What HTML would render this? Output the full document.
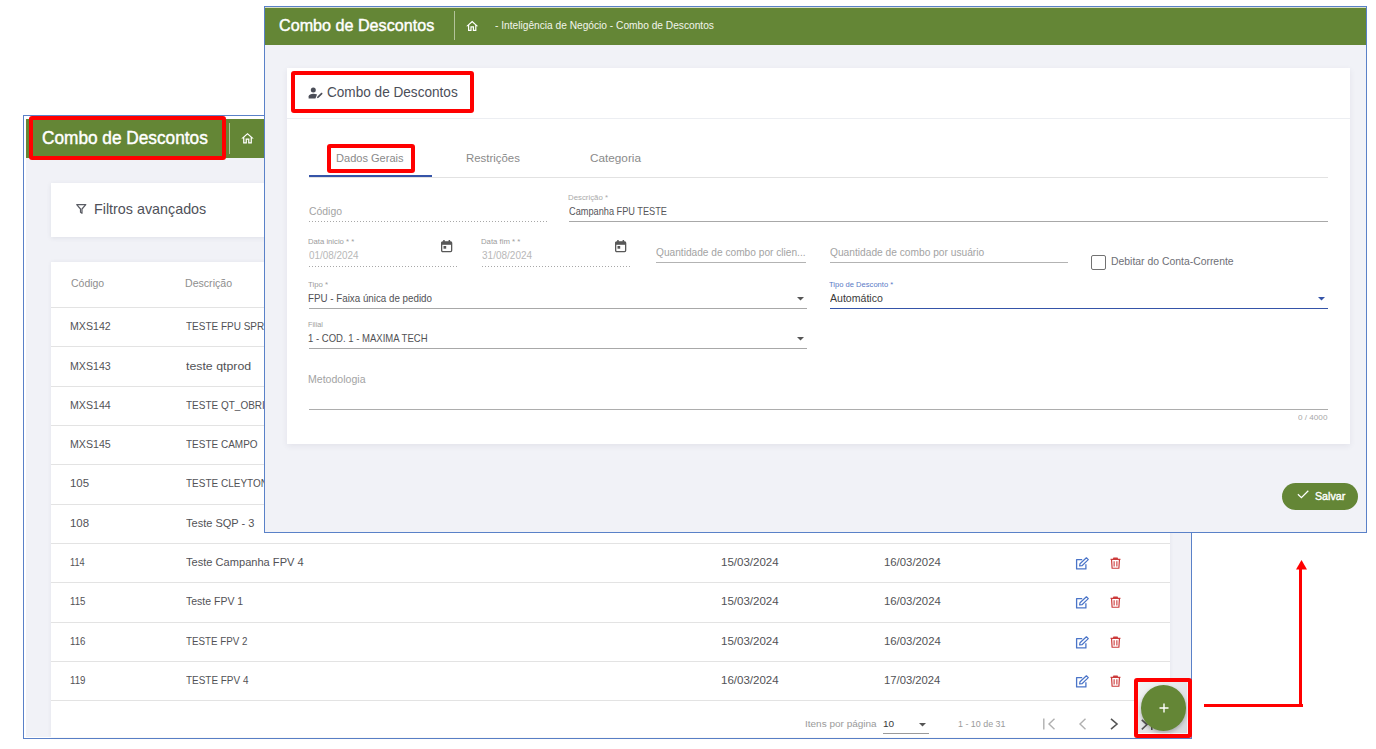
<!DOCTYPE html>
<html><head><meta charset="utf-8">
<style>
*{margin:0;padding:0;box-sizing:border-box}
html,body{width:1376px;height:749px;overflow:hidden;background:#fff;font-family:"Liberation Sans",sans-serif}
.L{position:absolute;left:0;top:0;width:1376px;height:749px}
.b{position:absolute}
.t{position:absolute;white-space:nowrap;line-height:1;transform-origin:0 0}
.r{font-size:11.5px;color:#3d3d3d}
.sep{position:absolute;left:51px;width:1119px;height:1px;background:#e3e3e3}
.red{position:absolute;border:4px solid #ff0000;border-radius:3px}
.ul{position:absolute;height:1px;background:#b3b3b3}
.dot{position:absolute;height:1px;background-image:linear-gradient(to right,#a8a8a8 50%,rgba(255,255,255,0) 50%);background-size:3px 1px}
svg{position:absolute;overflow:visible}
.card{position:absolute;background:#fff;box-shadow:0 1px 5px rgba(40,50,80,.09)}
</style></head><body>

<div class="L" id="backL">
  <div class="b" style="left:23px;top:115px;width:1169px;height:624px;border:1px solid #5a81c8;background:#fff"></div>
  <div class="b" style="left:26px;top:119px;width:1165px;height:618px;background:#f1f2f7;overflow:hidden"></div>
  <div class="b" style="left:26px;top:119px;width:1165px;height:39px;background:#648636"></div>
  <div class="b" style="left:228.5px;top:123px;width:1.5px;height:31px;background:#b3c39a"></div>
  <svg style="left:240.3px;top:130.5px" width="15" height="15" viewBox="0 0 24 24"><path fill="#fff" d="M12 5.69l5 4.5V18h-2v-6H9v6H7v-7.81l5-4.5M12 3L2 12h3v8h6v-6h2v6h6v-8h3L12 3z"/></svg>

  <div class="card" style="left:51px;top:183px;width:1119px;height:54px"></div>
  <svg style="left:76px;top:204px" width="11" height="10" viewBox="0 0 11 10"><path d="M0.7 0.7H9.8L6 5V9.3L4.5 8.3V5Z" fill="none" stroke="#5a5c64" stroke-width="1.2" stroke-linejoin="round"/></svg>

  <div class="card" style="left:51px;top:261.5px;width:1119px;height:475.5px;box-shadow:0 0 4px rgba(40,50,80,.07)"></div>
  <div class="sep" style="top:307.1px"></div>
<div class="sep" style="top:346.4px"></div>
<div class="sep" style="top:385.7px"></div>
<div class="sep" style="top:425.0px"></div>
<div class="sep" style="top:464.3px"></div>
<div class="sep" style="top:503.6px"></div>
<div class="sep" style="top:542.9px"></div>
<div class="sep" style="top:582.2px"></div>
<div class="sep" style="top:621.5px"></div>
<div class="sep" style="top:660.8px"></div>
<div class="sep" style="top:700.1px"></div>
  <svg style="left:1075px;top:557.0px" width="15" height="13" viewBox="0 0 15 13"><path d="M7.2 2.6H1.6V11.9H10.9V7.2" stroke="#4a74c8" stroke-width="1.3" fill="none" stroke-linejoin="round"/><path d="M4.6 9L5 6.8L11.4 0.8L13.3 2.6L7 8.7Z" stroke="#4a74c8" stroke-width="1.2" fill="none" stroke-linejoin="round"/></svg>
<svg style="left:1109.6px;top:557.0px" width="11" height="12.4" viewBox="0 0 12 13"><path d="M0.6 2.4H11.4M4 2.4V0.9H8V2.4M1.7 2.6L2.3 12H9.7L10.3 2.6" stroke="#cc3b3b" stroke-width="1.3" fill="none" stroke-linejoin="round"/><path d="M4.5 4.4V10M7.5 4.4V10" stroke="#cc3b3b" stroke-width="1.2"/></svg>
<svg style="left:1075px;top:596.3px" width="15" height="13" viewBox="0 0 15 13"><path d="M7.2 2.6H1.6V11.9H10.9V7.2" stroke="#4a74c8" stroke-width="1.3" fill="none" stroke-linejoin="round"/><path d="M4.6 9L5 6.8L11.4 0.8L13.3 2.6L7 8.7Z" stroke="#4a74c8" stroke-width="1.2" fill="none" stroke-linejoin="round"/></svg>
<svg style="left:1109.6px;top:596.3px" width="11" height="12.4" viewBox="0 0 12 13"><path d="M0.6 2.4H11.4M4 2.4V0.9H8V2.4M1.7 2.6L2.3 12H9.7L10.3 2.6" stroke="#cc3b3b" stroke-width="1.3" fill="none" stroke-linejoin="round"/><path d="M4.5 4.4V10M7.5 4.4V10" stroke="#cc3b3b" stroke-width="1.2"/></svg>
<svg style="left:1075px;top:635.6px" width="15" height="13" viewBox="0 0 15 13"><path d="M7.2 2.6H1.6V11.9H10.9V7.2" stroke="#4a74c8" stroke-width="1.3" fill="none" stroke-linejoin="round"/><path d="M4.6 9L5 6.8L11.4 0.8L13.3 2.6L7 8.7Z" stroke="#4a74c8" stroke-width="1.2" fill="none" stroke-linejoin="round"/></svg>
<svg style="left:1109.6px;top:635.6px" width="11" height="12.4" viewBox="0 0 12 13"><path d="M0.6 2.4H11.4M4 2.4V0.9H8V2.4M1.7 2.6L2.3 12H9.7L10.3 2.6" stroke="#cc3b3b" stroke-width="1.3" fill="none" stroke-linejoin="round"/><path d="M4.5 4.4V10M7.5 4.4V10" stroke="#cc3b3b" stroke-width="1.2"/></svg>
<svg style="left:1075px;top:674.9px" width="15" height="13" viewBox="0 0 15 13"><path d="M7.2 2.6H1.6V11.9H10.9V7.2" stroke="#4a74c8" stroke-width="1.3" fill="none" stroke-linejoin="round"/><path d="M4.6 9L5 6.8L11.4 0.8L13.3 2.6L7 8.7Z" stroke="#4a74c8" stroke-width="1.2" fill="none" stroke-linejoin="round"/></svg>
<svg style="left:1109.6px;top:674.9px" width="11" height="12.4" viewBox="0 0 12 13"><path d="M0.6 2.4H11.4M4 2.4V0.9H8V2.4M1.7 2.6L2.3 12H9.7L10.3 2.6" stroke="#cc3b3b" stroke-width="1.3" fill="none" stroke-linejoin="round"/><path d="M4.5 4.4V10M7.5 4.4V10" stroke="#cc3b3b" stroke-width="1.2"/></svg>

  <div class="b" style="left:883px;top:733px;width:45.5px;height:1px;background:#9a9a9a"></div>
  <svg style="left:918.5px;top:723px" width="7" height="4" viewBox="0 0 7 4"><path d="M0 0H7L3.5 3.6Z" fill="#555"/></svg>
  <svg style="left:1043px;top:718px" width="80" height="12" viewBox="0 0 80 12">
    <path d="M0.8 0.5V11.5" stroke="#b0b0b0" stroke-width="1.4" fill="none"/>
    <path d="M11.5 0.8L6 6L11.5 11.2" stroke="#b0b0b0" stroke-width="1.4" fill="none"/>
    <path d="M42.5 0.8L37 6L42.5 11.2" stroke="#b0b0b0" stroke-width="1.4" fill="none"/>
    <path d="M68 0.8L74 6L68 11.2" stroke="#555" stroke-width="1.6" fill="none"/>
  </svg>
  <div class="t" style="left:42.10px;top:129.00px;font-size:18.0px;color:#ffffff;font-weight:normal;transform:scaleX(0.9576);-webkit-text-stroke:0.45px #fff">Combo de Descontos</div>
<div class="t" style="left:93.60px;top:202.00px;font-size:14.5px;color:#4f5159;font-weight:normal;transform:scaleX(0.9875);">Filtros avançados</div>
<div class="t" style="left:71.10px;top:279.00px;font-size:10.0px;color:#8e8e8e;font-weight:normal;transform:scaleX(1.0476);">Código</div>
<div class="t" style="left:185.00px;top:279.00px;font-size:10.0px;color:#8e8e8e;font-weight:normal;transform:scaleX(1.0583);">Descrição</div>
<div class="t" style="left:70.10px;top:320.00px;font-size:11.75px;color:#525256;font-weight:normal;transform:scaleX(0.9047);">MXS142</div>
<div class="t" style="left:186.20px;top:320.00px;font-size:11.75px;color:#525256;font-weight:normal;transform:scaleX(0.8500);">TESTE FPU SPRINT</div>
<div class="t" style="left:70.10px;top:360.00px;font-size:11.75px;color:#525256;font-weight:normal;transform:scaleX(0.9047);">MXS143</div>
<div class="t" style="left:186.20px;top:360.00px;font-size:11.75px;color:#525256;font-weight:normal;transform:scaleX(1.0494);">teste qtprod</div>
<div class="t" style="left:70.10px;top:399.00px;font-size:11.75px;color:#525256;font-weight:normal;transform:scaleX(0.9047);">MXS144</div>
<div class="t" style="left:186.20px;top:399.00px;font-size:11.75px;color:#525256;font-weight:normal;transform:scaleX(0.8500);">TESTE QT_OBRIGATORIO</div>
<div class="t" style="left:70.10px;top:438.00px;font-size:11.75px;color:#525256;font-weight:normal;transform:scaleX(0.9047);">MXS145</div>
<div class="t" style="left:186.20px;top:438.00px;font-size:11.75px;color:#525256;font-weight:normal;transform:scaleX(0.8500);">TESTE CAMPO</div>
<div class="t" style="left:70.10px;top:477.00px;font-size:11.75px;color:#525256;font-weight:normal;transform:scaleX(0.9730);">105</div>
<div class="t" style="left:186.20px;top:477.00px;font-size:11.75px;color:#525256;font-weight:normal;transform:scaleX(0.8500);">TESTE CLEYTON</div>
<div class="t" style="left:70.10px;top:517.00px;font-size:11.75px;color:#525256;font-weight:normal;transform:scaleX(0.9730);">108</div>
<div class="t" style="left:186.20px;top:517.00px;font-size:11.75px;color:#525256;font-weight:normal;transform:scaleX(0.9371);">Teste SQP - 3</div>
<div class="t" style="left:70.10px;top:556.00px;font-size:11.75px;color:#525256;font-weight:normal;transform:scaleX(0.7818);">114</div>
<div class="t" style="left:186.20px;top:556.00px;font-size:11.75px;color:#525256;font-weight:normal;transform:scaleX(0.9432);">Teste Campanha FPV 4</div>
<div class="t" style="left:720.90px;top:556.00px;font-size:11.75px;color:#525256;font-weight:normal;transform:scaleX(0.9811);">15/03/2024</div>
<div class="t" style="left:884.00px;top:556.00px;font-size:11.75px;color:#525256;font-weight:normal;transform:scaleX(0.9655);">16/03/2024</div>
<div class="t" style="left:70.10px;top:595.00px;font-size:11.75px;color:#525256;font-weight:normal;transform:scaleX(0.8235);">115</div>
<div class="t" style="left:186.20px;top:595.00px;font-size:11.75px;color:#525256;font-weight:normal;transform:scaleX(0.8939);">Teste FPV 1</div>
<div class="t" style="left:720.90px;top:595.00px;font-size:11.75px;color:#525256;font-weight:normal;transform:scaleX(0.9811);">15/03/2024</div>
<div class="t" style="left:884.00px;top:595.00px;font-size:11.75px;color:#525256;font-weight:normal;transform:scaleX(0.9655);">16/03/2024</div>
<div class="t" style="left:70.10px;top:635.00px;font-size:11.75px;color:#525256;font-weight:normal;transform:scaleX(0.8235);">116</div>
<div class="t" style="left:186.20px;top:635.00px;font-size:11.75px;color:#525256;font-weight:normal;transform:scaleX(0.8330);">TESTE FPV 2</div>
<div class="t" style="left:720.90px;top:635.00px;font-size:11.75px;color:#525256;font-weight:normal;transform:scaleX(0.9811);">15/03/2024</div>
<div class="t" style="left:884.00px;top:635.00px;font-size:11.75px;color:#525256;font-weight:normal;transform:scaleX(0.9655);">16/03/2024</div>
<div class="t" style="left:70.10px;top:674.00px;font-size:11.75px;color:#525256;font-weight:normal;transform:scaleX(0.8235);">119</div>
<div class="t" style="left:186.20px;top:674.00px;font-size:11.75px;color:#525256;font-weight:normal;transform:scaleX(0.8460);">TESTE FPV 4</div>
<div class="t" style="left:720.90px;top:674.00px;font-size:11.75px;color:#525256;font-weight:normal;transform:scaleX(0.9811);">16/03/2024</div>
<div class="t" style="left:884.00px;top:674.00px;font-size:11.75px;color:#525256;font-weight:normal;transform:scaleX(0.9571);">17/03/2024</div>
<div class="t" style="left:804.80px;top:720.00px;font-size:9.25px;color:#9a9a9a;font-weight:normal;transform:scaleX(1.0801);">Itens por página</div>
<div class="t" style="left:882.50px;top:719.00px;font-size:9.5px;color:#3a3a3a;font-weight:normal;transform:scaleX(1.0585);">10</div>
<div class="t" style="left:958.40px;top:720.00px;font-size:9.25px;color:#9a9a9a;font-weight:normal;transform:scaleX(0.9626);">1 - 10 de 31</div>
</div>

<div class="L" id="frontL">
  <div class="b" style="left:264px;top:6px;width:1103px;height:527px;border:1px solid #5a81c8;background:#f1f2f7"></div>
  <div class="b" style="left:265px;top:7px;width:1101px;height:1px;background:#d9e0c6"></div>
  <div class="b" style="left:265px;top:8px;width:1101px;height:36.5px;background:#648636"></div>
  <div class="b" style="left:453.5px;top:11px;width:1.5px;height:29px;background:#b3c39a"></div>
  <svg style="left:464.8px;top:18.6px" width="14.4" height="14.4" viewBox="0 0 24 24"><path fill="#fff" d="M12 5.69l5 4.5V18h-2v-6H9v6H7v-7.81l5-4.5M12 3L2 12h3v8h6v-6h2v6h6v-8h3L12 3z"/></svg>

  <div class="card" style="left:287px;top:68px;width:1063px;height:376px;box-shadow:0 2px 6px rgba(60,50,90,.08)"></div>
  <div class="b" style="left:287px;top:117.5px;width:1063px;height:1px;background:#eceef2"></div>
  <!-- person edit icon -->
  <svg style="left:308px;top:87px" width="15" height="12" viewBox="0 0 15 12">
    <circle cx="5.3" cy="3.0" r="2.5" fill="#4b4e58"/>
    <path d="M0.6 11.6V9.6C0.6 7.8 3.2 6.8 5.3 6.8C6.7 6.8 7.9 7.1 9.1 7.6L7.4 11.6Z" fill="#4b4e58"/>
    <path d="M8.9 11.3L9.4 9.6L13.0 6.0C13.4 5.6 14.0 5.6 14.3 6.0C14.6 6.3 14.6 6.9 14.2 7.2L10.6 10.8Z" fill="#4b4e58"/>
  </svg>
  <!-- tabs -->
  <div class="b" style="left:309px;top:177px;width:1019px;height:1px;background:#e2e2e2"></div>
  <div class="b" style="left:309px;top:175px;width:122.7px;height:2px;background:#3554a8"></div>

  <!-- fields -->
  <div class="dot" style="left:309px;top:221px;width:238px"></div>
  <div class="ul" style="left:569px;top:221px;width:759px;background:#a8a8a8"></div>
  <div class="dot" style="left:309px;top:266px;width:149px"></div>
  <div class="dot" style="left:482px;top:266px;width:149.5px"></div>
  <svg style="left:441.0px;top:240.4px" width="11.3" height="12.3" viewBox="0 0 11.3 12.3"><rect x="2.2" y="0" width="1.5" height="2.4" fill="#585858"/><rect x="7.6" y="0" width="1.5" height="2.4" fill="#585858"/><rect x="0.65" y="1.9" width="10" height="9.75" rx="1.1" fill="none" stroke="#585858" stroke-width="1.3"/><rect x="0.65" y="1.9" width="10" height="2.9" fill="#585858"/><rect x="2.5" y="6.0" width="2.7" height="2.7" fill="#585858"/></svg>
  <svg style="left:614.5px;top:240.4px" width="11.3" height="12.3" viewBox="0 0 11.3 12.3"><rect x="2.2" y="0" width="1.5" height="2.4" fill="#585858"/><rect x="7.6" y="0" width="1.5" height="2.4" fill="#585858"/><rect x="0.65" y="1.9" width="10" height="9.75" rx="1.1" fill="none" stroke="#585858" stroke-width="1.3"/><rect x="0.65" y="1.9" width="10" height="2.9" fill="#585858"/><rect x="2.5" y="6.0" width="2.7" height="2.7" fill="#585858"/></svg>
  <div class="ul" style="left:656px;top:262px;width:150px"></div>
  <div class="ul" style="left:830px;top:262px;width:237.5px"></div>
  <div class="b" style="left:1091px;top:254.5px;width:15px;height:15px;border:1.7px solid #727272;border-radius:2px"></div>

  <div class="ul" style="left:309px;top:308px;width:498px;background:#a8a8a8"></div>
  <svg style="left:796.5px;top:296.5px" width="7" height="4" viewBox="0 0 7 4"><path d="M0 0H7L3.5 3.6Z" fill="#555"/></svg>
  <div class="b" style="left:830px;top:307.6px;width:497.6px;height:1.6px;background:#3554a8"></div>
  <svg style="left:1318px;top:296.5px" width="7" height="4" viewBox="0 0 7 4"><path d="M0 0H7L3.5 3.6Z" fill="#3554a8"/></svg>

  <div class="ul" style="left:309px;top:348px;width:498px;background:#a8a8a8"></div>
  <svg style="left:796.5px;top:336.5px" width="7" height="4" viewBox="0 0 7 4"><path d="M0 0H7L3.5 3.6Z" fill="#555"/></svg>

  <div class="ul" style="left:309px;top:409px;width:1019px;background:#adadad"></div>

  <!-- salvar -->
  <div class="b" style="left:1282px;top:482.6px;width:75.8px;height:27.4px;border-radius:14px;background:#648636"></div>
  <svg style="left:1297px;top:490px" width="12" height="9" viewBox="0 0 12 9"><path d="M0.9 4.3L4.4 7.6L11.3 0.8" stroke="#fff" stroke-width="1.3" fill="none"/></svg>
  <div class="t" style="left:279.20px;top:17.00px;font-size:17.25px;color:#ffffff;font-weight:normal;transform:scaleX(0.9358);-webkit-text-stroke:0.45px #fff">Combo de Descontos</div>
<div class="t" style="left:495.10px;top:20.00px;font-size:10.75px;color:#f2f5ec;font-weight:normal;transform:scaleX(0.9468);">- Inteligência de Negócio - Combo de Descontos</div>
<div class="t" style="left:326.60px;top:85.00px;font-size:14.0px;color:#4b4e58;font-weight:normal;transform:scaleX(0.9707);">Combo de Descontos</div>
<div class="t" style="left:336.10px;top:153.00px;font-size:11.0px;color:#8a8a8a;font-weight:normal;transform:scaleX(1.0046);">Dados Gerais</div>
<div class="t" style="left:466.40px;top:153.00px;font-size:11.0px;color:#8a8a8a;font-weight:normal;transform:scaleX(1.0374);">Restrições</div>
<div class="t" style="left:590.40px;top:153.00px;font-size:11.0px;color:#8a8a8a;font-weight:normal;transform:scaleX(1.0683);">Categoria</div>
<div class="t" style="left:308.90px;top:206.00px;font-size:10.5px;color:#a3a3a3;font-weight:normal;transform:scaleX(0.9909);">Código</div>
<div class="t" style="left:568.20px;top:194.00px;font-size:7.25px;color:#aaaaaa;font-weight:normal;transform:scaleX(1.0780);">Descrição *</div>
<div class="t" style="left:569.20px;top:207.00px;font-size:10.25px;color:#56565a;font-weight:normal;transform:scaleX(0.8973);">Campanha FPU TESTE</div>
<div class="t" style="left:308.00px;top:238.00px;font-size:7.5px;color:#9d9d9d;font-weight:normal;transform:scaleX(1.0252);">Data inicio * *</div>
<div class="t" style="left:309.00px;top:250.00px;font-size:10.5px;color:#b8b8b8;font-weight:normal;transform:scaleX(0.9443);">01/08/2024</div>
<div class="t" style="left:481.30px;top:238.00px;font-size:7.5px;color:#9d9d9d;font-weight:normal;transform:scaleX(1.0352);">Data fim * *</div>
<div class="t" style="left:482.30px;top:250.00px;font-size:10.5px;color:#b8b8b8;font-weight:normal;transform:scaleX(0.9531);">31/08/2024</div>
<div class="t" style="left:655.90px;top:247.00px;font-size:11.0px;color:#a3a3a3;font-weight:normal;transform:scaleX(0.9230);">Quantidade de combo por clien...</div>
<div class="t" style="left:829.70px;top:247.00px;font-size:11.0px;color:#a3a3a3;font-weight:normal;transform:scaleX(0.9271);">Quantidade de combo por usuário</div>
<div class="t" style="left:1111.30px;top:256.00px;font-size:10.75px;color:#6e6f76;font-weight:normal;transform:scaleX(0.9680);">Debitar do Conta-Corrente</div>
<div class="t" style="left:308.00px;top:281.00px;font-size:7.5px;color:#9d9d9d;font-weight:normal;transform:scaleX(1.0390);">Tipo *</div>
<div class="t" style="left:308.00px;top:293.00px;font-size:10.5px;color:#515155;font-weight:normal;transform:scaleX(0.9318);">FPU - Faixa única de pedido</div>
<div class="t" style="left:829.00px;top:281.00px;font-size:7.75px;color:#5a7bc6;font-weight:normal;transform:scaleX(0.9783);">Tipo de Desconto *</div>
<div class="t" style="left:830.00px;top:293.00px;font-size:10.5px;color:#3a3a3a;font-weight:normal;transform:scaleX(1.0058);">Automático</div>
<div class="t" style="left:308.00px;top:321.00px;font-size:7.25px;color:#9d9d9d;font-weight:normal;transform:scaleX(1.0000);">Filial</div>
<div class="t" style="left:308.00px;top:333.00px;font-size:10.5px;color:#515155;font-weight:normal;transform:scaleX(0.9077);">1 - COD. 1 - MAXIMA TECH</div>
<div class="t" style="left:307.90px;top:374.00px;font-size:10.5px;color:#a3a3a3;font-weight:normal;transform:scaleX(1.0054);">Metodologia</div>
<div class="t" style="left:1298.30px;top:414.00px;font-size:8.0px;color:#a8a8a8;font-weight:normal;transform:scaleX(1.0175);">0 / 4000</div>
<div class="t" style="left:1314.90px;top:491.00px;font-size:11.25px;color:#ffffff;font-weight:normal;transform:scaleX(0.9469);-webkit-text-stroke:0.4px #fff">Salvar</div>
</div>

<div class="L" id="annot">
  <div class="red" style="left:29px;top:116px;width:196.5px;height:43.5px"></div>
  <div class="red" style="left:290.5px;top:70.7px;width:183px;height:42px"></div>
  <div class="red" style="left:327px;top:144px;width:88px;height:28.7px"></div>
  <!-- FAB -->
  <div class="b" style="left:1138px;top:682px;width:49px;height:51px;background:linear-gradient(135deg,#f4f5f5 0%,#e6e8ea 45%,#d6d8db 100%)"></div>
  <svg style="left:1141px;top:718.5px" width="13" height="12" viewBox="0 0 13 12"><path d="M0.8 0.8L6 5.6L0.8 10.4" stroke="#555" stroke-width="1.6" fill="none"/><path d="M10.8 0.5V11" stroke="#555" stroke-width="1.6"/></svg>
  <div class="b" style="left:1140.8px;top:684.8px;width:45.5px;height:45.8px;border-radius:50%;background:#648636;box-shadow:0 2px 4px rgba(0,0,0,.25)"></div>
  <svg style="left:1158.5px;top:702.5px" width="10" height="10" viewBox="0 0 10 10"><path d="M5 0.5V9.5M0.5 5H9.5" stroke="#fff" stroke-width="1.4"/></svg>
  <div class="red" style="left:1134px;top:678px;width:57.5px;height:59.5px"></div>
  <!-- arrow -->
  <div class="b" style="left:1203.5px;top:704px;width:99px;height:3px;background:#ff0000"></div>
  <div class="b" style="left:1299.3px;top:568px;width:3px;height:39px;background:#ff0000;height:139px"></div>
  <svg style="left:1295.5px;top:560px" width="11" height="10" viewBox="0 0 11 10"><path d="M5.5 0L11 9.5H0Z" fill="#ff0000"/></svg>
</div>
</body></html>
